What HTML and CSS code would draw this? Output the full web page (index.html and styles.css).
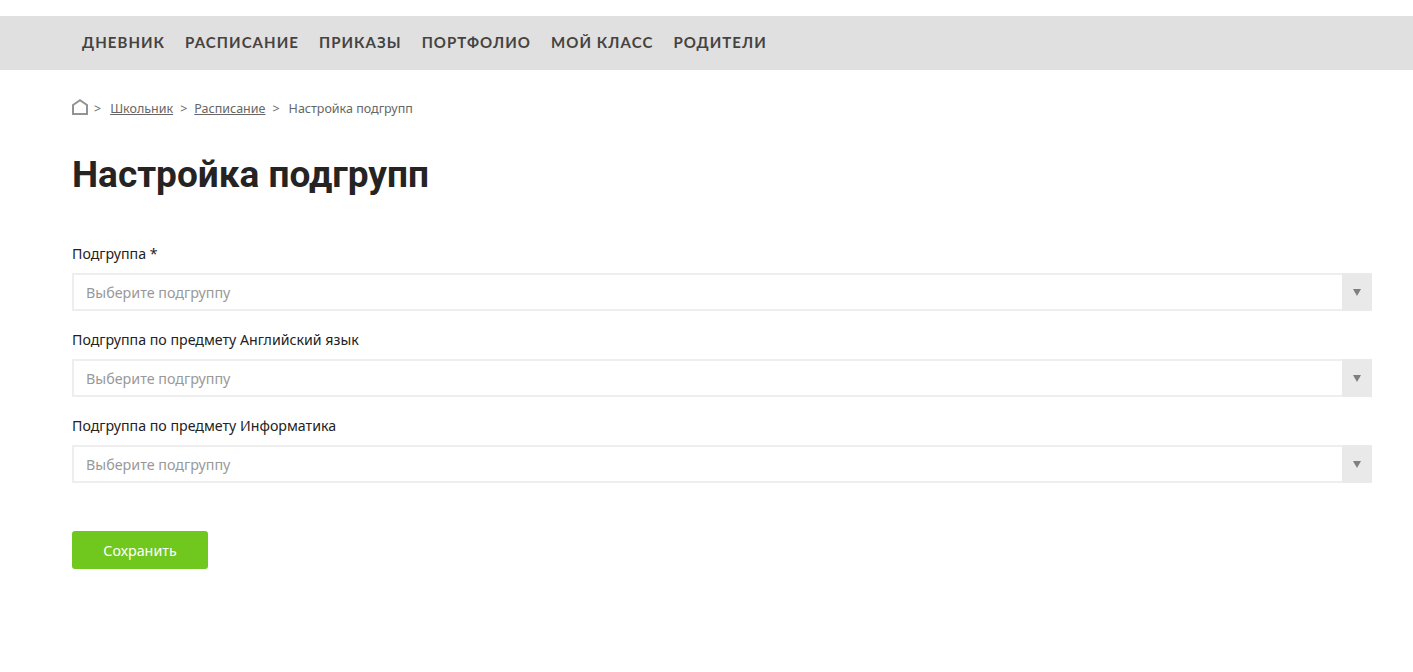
FILE: index.html
```html
<!DOCTYPE html>
<html lang="ru">
<head>
<meta charset="utf-8">
<title>Настройка подгрупп</title>
<link rel="stylesheet" href="styles.css">
</head>
<body>
<nav class="nav">
  <a class="nav-link">ДНЕВНИК</a>
  <a class="nav-link">РАСПИСАНИЕ</a>
  <a class="nav-link">ПРИКАЗЫ</a>
  <a class="nav-link">ПОРТФОЛИО</a>
  <a class="nav-link">МОЙ КЛАСС</a>
  <a class="nav-link">РОДИТЕЛИ</a>
</nav>
<main class="content">
  <div class="crumbs">
    <svg class="home" width="16" height="16" viewBox="0 0 16 16"><path d="M1 6 L8 1.2 L15 6 V15 H1 Z" fill="none" stroke="#939393" stroke-width="2"/></svg>
    <span class="sep sep-first">&gt;</span>
    <a class="crumb-link">Школьник</a>
    <span class="sep">&gt;</span>
    <a class="crumb-link">Расписание</a>
    <span class="sep">&gt;</span>
    <span class="crumb-current">Настройка подгрупп</span>
  </div>
  <h1 class="title">Настройка подгрупп</h1>
  <form class="form">
    <div class="field">
      <div class="label">Подгруппа *</div>
      <div class="select"><span class="placeholder">Выберите подгруппу</span><span class="arrow"></span></div>
    </div>
    <div class="field">
      <div class="label">Подгруппа по предмету Английский язык</div>
      <div class="select"><span class="placeholder">Выберите подгруппу</span><span class="arrow"></span></div>
    </div>
    <div class="field">
      <div class="label">Подгруппа по предмету Информатика</div>
      <div class="select"><span class="placeholder">Выберите подгруппу</span><span class="arrow"></span></div>
    </div>
    <div class="button">Сохранить</div>
  </form>
</main>
</body>
</html>
```
FILE: styles.css
```css
* { box-sizing: border-box; }
html, body { margin: 0; padding: 0; background: #fff; }
body { font-family: "Noto Sans", "Open Sans", sans-serif; color: #222; padding-top: 16px; height: 672px; overflow: hidden; }
.nav { height: 54px; background: #e0e0e0; display: flex; align-items: center; gap: 20px; padding-left: 82px; padding-bottom: 3px; }
.nav-link { font-family: "Lato", sans-serif; font-weight: 700; font-size: 15px; letter-spacing: 1.05px; color: #454341; line-height: 20px; }
.content { padding: 0 41px 0 72px; }
.crumbs { display: flex; align-items: center; height: 20px; margin-top: 28px; font-size: 12.5px; color: #666; }
.home { margin-top: -3px; }
.sep { margin: 0 7px; }
.sep-first { margin: 0 9px 0 6px; }
.crumb-link { text-decoration: underline; color: #666; }
.crumb-current { margin-left: 2px; }
.title { margin: 0; padding-top: 34px; font-family: "Roboto", sans-serif; font-size: 37px; line-height: 46px; font-weight: 700; color: #262323; height: 126px; }
.field { height: 86px; }
.label { font-size: 14.2px; line-height: 20px; height: 29px; color: #222; }
.select { position: relative; height: 38px; border: 2px solid #eee; display: flex; align-items: center; padding-left: 12px; background: #fff; }
.placeholder { font-size: 14.3px; color: #999; }
.arrow { position: absolute; right: -2px; top: -2px; bottom: -2px; width: 30px; background: #e9e9e9; }
.arrow::after { content: ""; position: absolute; left: 11px; top: 16px; border-left: 4px solid transparent; border-right: 4px solid transparent; border-top: 7px solid #7f7f7f; }
.button { width: 136px; height: 38px; margin-top: 29px; background: #70c81e; border-radius: 3px; color: #fff; font-size: 14.3px; display: flex; align-items: center; justify-content: center; }
```
